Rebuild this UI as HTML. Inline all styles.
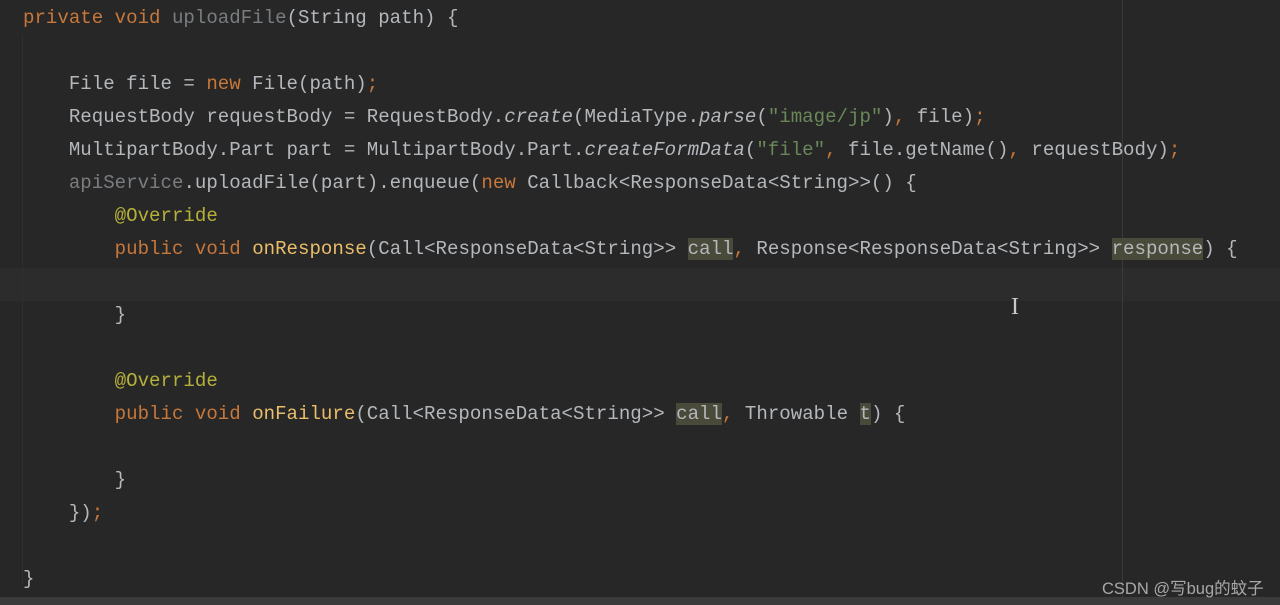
<!DOCTYPE html>
<html><head><meta charset="utf-8"><style>
html,body{margin:0;padding:0;}
body{width:1280px;height:605px;background:#272727;overflow:hidden;position:relative;font-family:"Liberation Mono",monospace;}
.code{position:absolute;left:23px;top:2px;font-size:19.1px;line-height:33px;color:#b4b8bc;white-space:pre;}
.k{color:#c7773a}.m{color:#7a7d80}.s{color:#6a8759}.a{color:#b5b03a}.f{color:#e9bd6a}.i{font-style:italic}
.h{background:#4a4a3a}
.cur{position:absolute;left:0;top:268px;width:1280px;height:33px;background:#2c2c2c}
.vl{position:absolute;left:1122px;top:0;width:1px;height:597px;background:#3a3a3a}
.gl{position:absolute;left:22px;top:34px;width:1px;height:550px;background:#2f2f2f}
.bar{position:absolute;left:0;top:597px;width:1280px;height:8px;background:#3b3b3b}
.wm{position:absolute;left:1102px;top:575px;font-family:"Liberation Sans","Noto Sans CJK SC",sans-serif;font-size:16.5px;color:#a8a8a8}
.cursor{position:absolute;left:1011px;top:294px;font-family:"Liberation Serif",serif;font-size:24px;color:#c8c8c8}
</style></head><body>
<div class="cur"></div><div class="vl"></div><div class="gl"></div>
<div class="code"><span class="k">private void</span> <span class="m">uploadFile</span>(String path) {

    File file = <span class="k">new</span> File(path)<span class="k">;</span>
    RequestBody requestBody = RequestBody.<span class="i">create</span>(MediaType.<span class="i">parse</span>(<span class="s">"image/jp"</span>)<span class="k">,</span> file)<span class="k">;</span>
    MultipartBody.Part part = MultipartBody.Part.<span class="i">createFormData</span>(<span class="s">"file"</span><span class="k">,</span> file.getName()<span class="k">,</span> requestBody)<span class="k">;</span>
    <span class="m">apiService</span>.uploadFile(part).enqueue(<span class="k">new</span> Callback&lt;ResponseData&lt;String&gt;&gt;() {
        <span class="a">@Override</span>
        <span class="k">public void</span> <span class="f">onResponse</span>(Call&lt;ResponseData&lt;String&gt;&gt; <span class="h">call</span><span class="k">,</span> Response&lt;ResponseData&lt;String&gt;&gt; <span class="h">response</span>) {

        }

        <span class="a">@Override</span>
        <span class="k">public void</span> <span class="f">onFailure</span>(Call&lt;ResponseData&lt;String&gt;&gt; <span class="h">call</span><span class="k">,</span> Throwable <span class="h">t</span>) {

        }
    })<span class="k">;</span>

}</div>
<div class="cursor">I</div>
<div class="bar"></div>
<div class="wm">CSDN @写bug的蚊子</div>
</body></html>
